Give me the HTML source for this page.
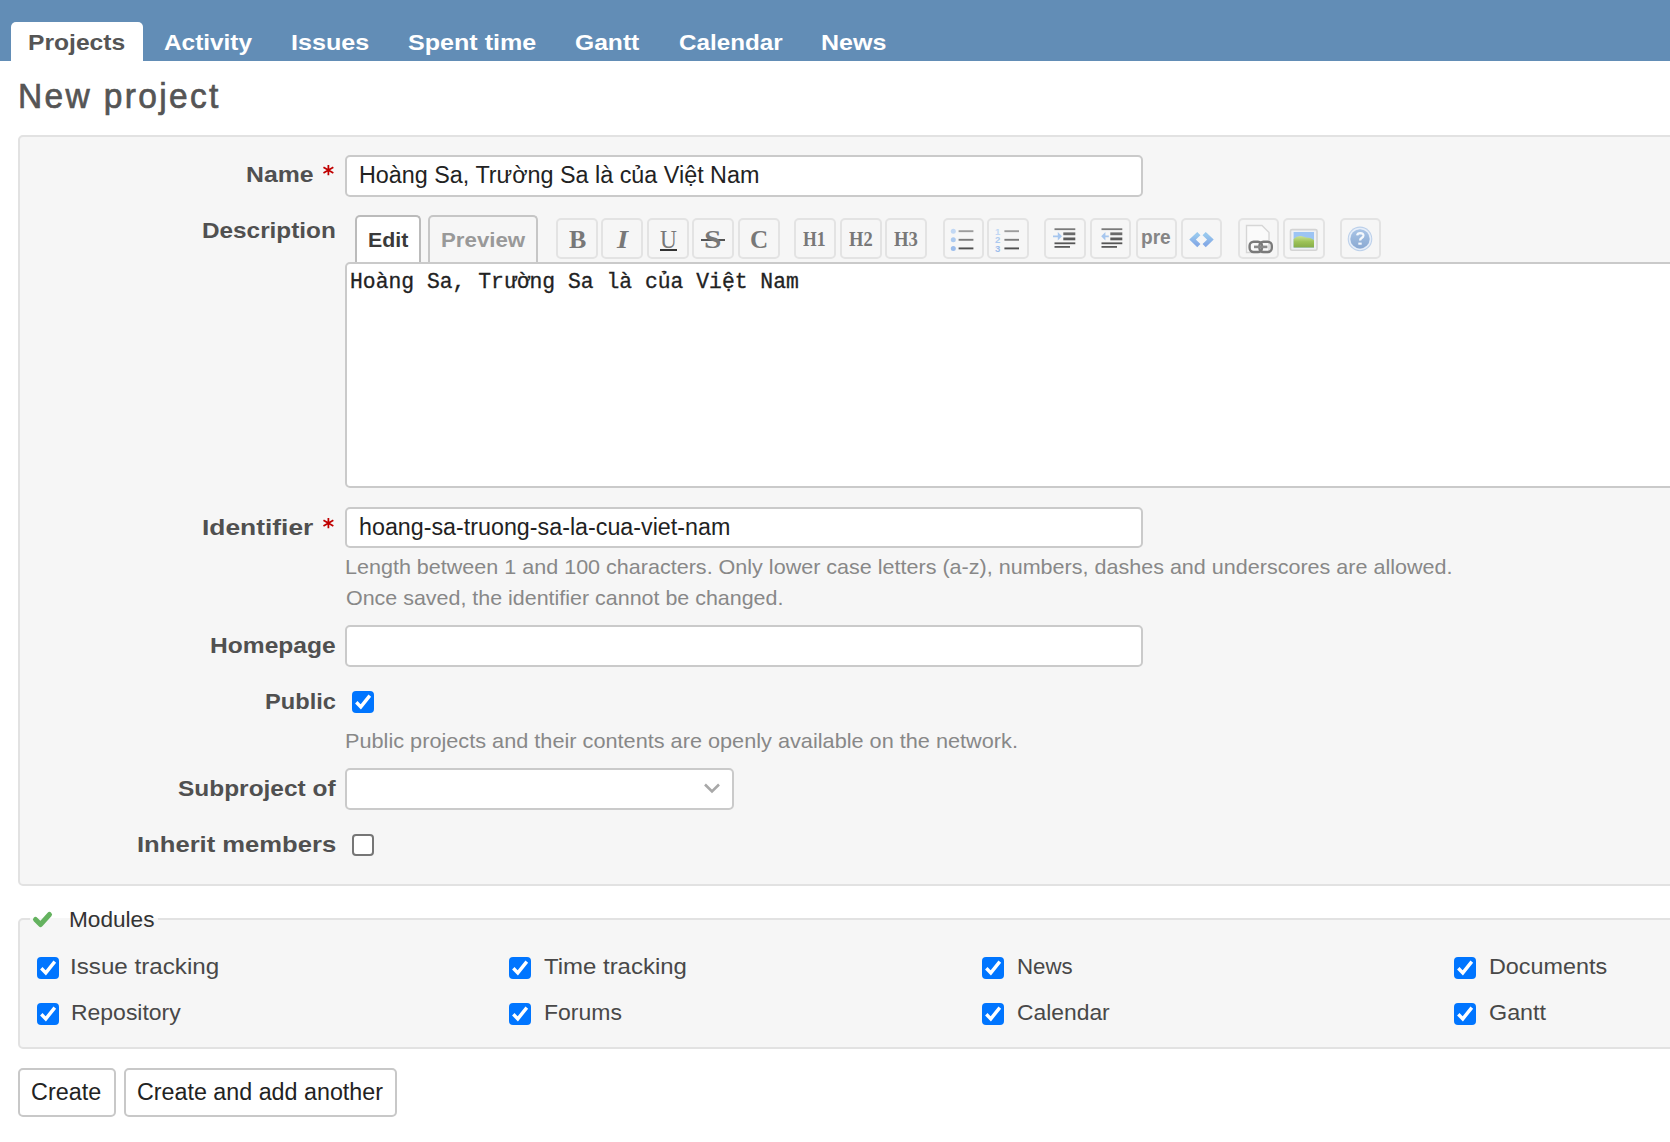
<!DOCTYPE html><html><head><meta charset="utf-8"><title>New project</title><style>
*{margin:0;padding:0;box-sizing:border-box}
html,body{width:1670px;height:1142px;overflow:hidden;background:#fff;position:relative;font-family:"Liberation Sans",sans-serif}
.a{position:absolute}
.t{position:absolute;white-space:pre;transform-origin:0 0}
.inp{position:absolute;background:#fff;border:2px solid #cacaca;border-radius:5px}
.tb{position:absolute;top:218px;width:41.7px;height:41.3px;border:2px solid #e3e3e3;border-radius:5px}
.cb{position:absolute;width:22px;height:22px;border-radius:4px;background:#0075ff}
.cb svg{position:absolute;left:0;top:0}
.btn{position:absolute;background:#fff;border:2px solid #c8c8c8;border-radius:5px}
</style></head><body>
<div class="a" style="left:0;top:0;width:1670px;height:61px;background:#628db6"></div>
<div class="a" style="left:11px;top:22px;width:132px;height:40px;background:#fff;border-radius:5px 5px 0 0"></div>
<div class="a" style="left:18px;top:135px;width:1700px;height:751px;background:#f6f6f6;border:2px solid #e2e2e2;border-radius:5px"></div>
<div class="inp" style="left:345px;top:155px;width:798px;height:42px"></div>
<div class="inp" style="left:345px;top:262px;width:1400px;height:226px;border-radius:5px 0 0 5px"></div>
<div class="a" style="left:355px;top:215px;width:66px;height:47px;background:#fff;border:2px solid #bbb;border-bottom:none;border-radius:5px 5px 0 0"></div>
<div class="a" style="left:428px;top:215px;width:110px;height:47px;background:#f6f6f6;border:2px solid #c6c6c6;border-bottom:none;border-radius:5px 5px 0 0"></div>
<div class="tb" style="left:556px"></div>
<div class="tb" style="left:601px"></div>
<div class="tb" style="left:647px"></div>
<div class="tb" style="left:692.3px"></div>
<div class="tb" style="left:738px"></div>
<div class="tb" style="left:794.4px"></div>
<div class="tb" style="left:840.4px"></div>
<div class="tb" style="left:885.4px"></div>
<div class="tb" style="left:942.5px"></div>
<div class="tb" style="left:987.3px"></div>
<div class="tb" style="left:1044.4px"></div>
<div class="tb" style="left:1089.6px"></div>
<div class="tb" style="left:1135.6px"></div>
<div class="tb" style="left:1180.6px"></div>
<div class="tb" style="left:1237.5px"></div>
<div class="tb" style="left:1283.1px"></div>
<div class="tb" style="left:1339.6px"></div>
<div class="inp" style="left:345px;top:507px;width:798px;height:41px"></div>
<div class="inp" style="left:345px;top:625px;width:798px;height:41.6px"></div>
<div class="inp" style="left:345px;top:768px;width:389px;height:41.5px"></div>
<svg class="a" style="left:700px;top:779.3px" width="24" height="18" viewBox="0 0 24 18"><path d="M5 5.5 L12 12.5 L19 5.5" fill="none" stroke="#a8a8a8" stroke-width="2.6"/></svg>
<div class="cb" style="left:352px;top:691px"><svg width="22" height="22" viewBox="0 0 22 22"><path d="M4.3 11.3 L8.8 15.9 L17.8 4.6" fill="none" stroke="#fff" stroke-width="3.4"/></svg></div>
<div class="a" style="left:352px;top:834px;width:22px;height:22px;border:2px solid #767676;border-radius:4px;background:#fff"></div>
<div class="a" style="left:18px;top:918px;width:1700px;height:131px;background:#f6f6f6;border:2px solid #e2e2e2;border-radius:5px"></div>
<div class="a" style="left:30px;top:900px;width:128px;height:18px;background:#fff"></div><div class="a" style="left:30px;top:918px;width:128px;height:2px;background:#f6f6f6"></div>
<svg class="a" style="left:30px;top:908px" width="24" height="22" viewBox="0 0 24 22"><path d="M5.5 11.5 L10.5 16.5 L19.5 6.5" fill="none" stroke="#64b25f" stroke-width="5" stroke-linecap="round" stroke-linejoin="round"/></svg>
<div class="cb" style="left:37px;top:957px"><svg width="22" height="22" viewBox="0 0 22 22"><path d="M4.3 11.3 L8.8 15.9 L17.8 4.6" fill="none" stroke="#fff" stroke-width="3.4"/></svg></div>
<div class="cb" style="left:37px;top:1003px"><svg width="22" height="22" viewBox="0 0 22 22"><path d="M4.3 11.3 L8.8 15.9 L17.8 4.6" fill="none" stroke="#fff" stroke-width="3.4"/></svg></div>
<div class="cb" style="left:509px;top:957px"><svg width="22" height="22" viewBox="0 0 22 22"><path d="M4.3 11.3 L8.8 15.9 L17.8 4.6" fill="none" stroke="#fff" stroke-width="3.4"/></svg></div>
<div class="cb" style="left:509px;top:1003px"><svg width="22" height="22" viewBox="0 0 22 22"><path d="M4.3 11.3 L8.8 15.9 L17.8 4.6" fill="none" stroke="#fff" stroke-width="3.4"/></svg></div>
<div class="cb" style="left:982px;top:957px"><svg width="22" height="22" viewBox="0 0 22 22"><path d="M4.3 11.3 L8.8 15.9 L17.8 4.6" fill="none" stroke="#fff" stroke-width="3.4"/></svg></div>
<div class="cb" style="left:982px;top:1003px"><svg width="22" height="22" viewBox="0 0 22 22"><path d="M4.3 11.3 L8.8 15.9 L17.8 4.6" fill="none" stroke="#fff" stroke-width="3.4"/></svg></div>
<div class="cb" style="left:1454px;top:957px"><svg width="22" height="22" viewBox="0 0 22 22"><path d="M4.3 11.3 L8.8 15.9 L17.8 4.6" fill="none" stroke="#fff" stroke-width="3.4"/></svg></div>
<div class="cb" style="left:1454px;top:1003px"><svg width="22" height="22" viewBox="0 0 22 22"><path d="M4.3 11.3 L8.8 15.9 L17.8 4.6" fill="none" stroke="#fff" stroke-width="3.4"/></svg></div>
<div class="btn" style="left:18px;top:1068px;width:98px;height:48.5px"></div>
<div class="btn" style="left:123.5px;top:1068px;width:273px;height:48.5px"></div>
<div class="a" style="left:660px;top:249px;width:16.5px;height:2px;background:#333"></div>
<div class="a" style="left:701px;top:239px;width:23.5px;height:2px;background:#555"></div>
<svg class="a" style="left:948px;top:226px" width="30" height="26" viewBox="0 0 30 26"><circle cx="5.3" cy="5.2" r="2.5" fill="#c2d8f4"/><rect x="10.6" y="4.25" width="14.8" height="1.9" fill="#9c9c9c"/><circle cx="5.3" cy="13.8" r="2.5" fill="#accaf0"/><rect x="10.6" y="12.850000000000001" width="14.8" height="1.9" fill="#7c7c7c"/><circle cx="5.3" cy="22.4" r="2.5" fill="#9cbdec"/><rect x="10.6" y="21.45" width="14.8" height="1.9" fill="#505050"/></svg>
<svg class="a" style="left:992px;top:226px" width="30" height="26" viewBox="0 0 30 26"><text x="3" y="8.6" font-family="Liberation Sans" font-weight="bold" font-size="9.6" fill="#c2d8f4">1</text><rect x="12.4" y="4.25" width="14.6" height="1.9" fill="#9c9c9c"/><text x="3" y="17.2" font-family="Liberation Sans" font-weight="bold" font-size="9.6" fill="#accaf0">2</text><rect x="12.4" y="12.850000000000001" width="14.6" height="1.9" fill="#7c7c7c"/><text x="3" y="25.799999999999997" font-family="Liberation Sans" font-weight="bold" font-size="9.6" fill="#9cbdec">3</text><rect x="12.4" y="21.45" width="14.6" height="1.9" fill="#505050"/></svg>
<svg class="a" style="left:1053px;top:226px" width="26" height="24" viewBox="0 0 26 24"><rect x="1.5" y="2.3" width="20.8" height="1.8" fill="#7a7a7a"/><rect x="10.3" y="6.4" width="12" height="2.8" fill="#6a6a6a"/><rect x="10.3" y="11.5" width="12" height="2.8" fill="#5a5a5a"/><rect x="1.5" y="16.4" width="20.8" height="1.8" fill="#555"/><rect x="1.5" y="20" width="15.5" height="1.8" fill="#5a5a5a"/><path d="M-0.2 9.4 H4.8 V6 L9 10.3 L4.8 14.6 V11.2 H-0.2 Z" fill="#a6c6ee"/></svg>
<svg class="a" style="left:1099.6px;top:226px" width="26" height="24" viewBox="0 0 26 24"><rect x="1.5" y="2.3" width="20.8" height="1.8" fill="#7a7a7a"/><rect x="10.3" y="6.4" width="12" height="2.8" fill="#6a6a6a"/><rect x="10.3" y="11.5" width="12" height="2.8" fill="#5a5a5a"/><rect x="1.5" y="16.4" width="20.8" height="1.8" fill="#555"/><rect x="1.5" y="20" width="15.5" height="1.8" fill="#5a5a5a"/><path d="M8.8 9.4 H5.4 V6 L1.2 10.3 L5.4 14.6 V11.2 H8.8 Z" fill="#a6c6ee"/></svg>
<svg class="a" style="left:1180px;top:220px" width="44" height="38" viewBox="0 0 44 38"><defs><linearGradient id="cg" x1="0" y1="0" x2="0" y2="1"><stop offset="0" stop-color="#98c8ee"/><stop offset="1" stop-color="#84aae6"/></linearGradient></defs><path d="M17.2 15.2 L12.6 19.6 L17.2 24" fill="none" stroke="url(#cg)" stroke-width="4.6" stroke-linejoin="miter" stroke-linecap="square"/><path d="M25.8 15.2 L30.4 19.6 L25.8 24" fill="none" stroke="url(#cg)" stroke-width="4.6" stroke-linejoin="miter" stroke-linecap="square"/></svg>
<svg class="a" style="left:1244px;top:224px" width="30" height="30" viewBox="0 0 30 30"><path d="M2.5 1.5 H18 L25 8.5 V28.5 H2.5 Z" fill="#fafafa" stroke="#d6d6d6" stroke-width="1.4"/><rect x="5.6" y="17.8" width="12.4" height="10.2" rx="4" fill="none" stroke="#7a7a7a" stroke-width="2.4"/><rect x="15.4" y="17.8" width="12.4" height="10.2" rx="4" fill="none" stroke="#7a7a7a" stroke-width="2.4"/><rect x="10" y="21.6" width="13.4" height="2.6" fill="#8a8a8a"/></svg>
<svg class="a" style="left:1289px;top:228px" width="30" height="24" viewBox="0 0 30 24"><defs><linearGradient id="hg" x1="0" y1="0" x2="0" y2="1"><stop offset="0" stop-color="#cce39a"/><stop offset="0.5" stop-color="#9cc257"/><stop offset="1" stop-color="#86ac48"/></linearGradient></defs><rect x="1.5" y="1.6" width="26.5" height="20.6" rx="1.5" fill="#eef0f4" stroke="#d4d4d4" stroke-width="1.6"/><rect x="4.6" y="4" width="20.4" height="15.6" fill="#9cc4f4"/><path d="M4.6 11 Q8 7.5 12 8 Q15 8.8 17 9.6 Q21 9.4 25 12 V19.6 H4.6 Z" fill="url(#hg)"/></svg>
<svg class="a" style="left:1346px;top:226px" width="28" height="26" viewBox="0 0 28 26"><defs><linearGradient id="qg" x1="0" y1="0" x2="0" y2="1"><stop offset="0" stop-color="#a8c4e6"/><stop offset="1" stop-color="#8aa9d2"/></linearGradient></defs><circle cx="14" cy="12.9" r="12.3" fill="#bcd0ea"/><circle cx="14" cy="12.9" r="10.5" fill="none" stroke="#e6eef9" stroke-width="1.5"/><circle cx="14" cy="12.9" r="9.5" fill="url(#qg)"/><path d="M11.2 9.4 Q11.4 7.1 14.4 7.1 Q17.6 7.3 17.4 9.7 Q17.2 11.3 15.5 12.1 Q14.1 12.8 14.1 14.6" fill="none" stroke="#f4f8fc" stroke-width="2.3"/><rect x="12.3" y="16.6" width="3.4" height="2.1" fill="#f4f8fc"/></svg>
<svg class="a" style="left:0;top:0;overflow:visible" width="1" height="1"><path d="M328.40 165.00 L328.40 175.20 M323.46 167.25 L333.34 172.95 M323.46 172.95 L333.34 167.25 " stroke="#c00000" stroke-width="1.75" fill="none"/></svg>
<svg class="a" style="left:0;top:0;overflow:visible" width="1" height="1"><path d="M328.40 518.00 L328.40 528.20 M323.46 520.25 L333.34 525.95 M323.46 525.95 L333.34 520.25 " stroke="#c00000" stroke-width="1.75" fill="none"/></svg>
<div class="t" style="left:27.91px;top:31.80px;font-family:'Liberation Sans';font-size:22.6px;line-height:22.6px;font-weight:bold;font-style:normal;color:#555;transform:scaleX(1.0902);letter-spacing:0px;">Projects</div>
<div class="t" style="left:164.00px;top:31.80px;font-family:'Liberation Sans';font-size:22.6px;line-height:22.6px;font-weight:bold;font-style:normal;color:#fff;transform:scaleX(1.0786);letter-spacing:0px;">Activity</div>
<div class="t" style="left:291.39px;top:31.80px;font-family:'Liberation Sans';font-size:22.6px;line-height:22.6px;font-weight:bold;font-style:normal;color:#fff;transform:scaleX(1.1123);letter-spacing:0px;">Issues</div>
<div class="t" style="left:408.00px;top:31.80px;font-family:'Liberation Sans';font-size:22.6px;line-height:22.6px;font-weight:bold;font-style:normal;color:#fff;transform:scaleX(1.1102);letter-spacing:0px;">Spent time</div>
<div class="t" style="left:575.00px;top:31.80px;font-family:'Liberation Sans';font-size:22.6px;line-height:22.6px;font-weight:bold;font-style:normal;color:#fff;transform:scaleX(1.0897);letter-spacing:0px;">Gantt</div>
<div class="t" style="left:678.70px;top:31.80px;font-family:'Liberation Sans';font-size:22.6px;line-height:22.6px;font-weight:bold;font-style:normal;color:#fff;transform:scaleX(1.0713);letter-spacing:0px;">Calendar</div>
<div class="t" style="left:820.89px;top:31.80px;font-family:'Liberation Sans';font-size:22.6px;line-height:22.6px;font-weight:bold;font-style:normal;color:#fff;transform:scaleX(1.1087);letter-spacing:0px;">News</div>
<div class="t" style="left:17.63px;top:79.20px;font-family:'Liberation Sans';font-size:35.8px;line-height:35.8px;font-weight:normal;font-style:normal;color:#555;transform:scaleX(0.9361);letter-spacing:2.5px;-webkit-text-stroke:0.7px #555;">New project</div>
<div class="t" style="left:246.41px;top:163.00px;font-family:'Liberation Sans';font-size:22.8px;line-height:22.8px;font-weight:bold;font-style:normal;color:#505050;transform:scaleX(1.0892);letter-spacing:0px;">Name</div>
<div class="t" style="left:201.93px;top:219.00px;font-family:'Liberation Sans';font-size:22.8px;line-height:22.8px;font-weight:bold;font-style:normal;color:#505050;transform:scaleX(1.0666);letter-spacing:0px;">Description</div>
<div class="t" style="left:201.84px;top:516.00px;font-family:'Liberation Sans';font-size:22.8px;line-height:22.8px;font-weight:bold;font-style:normal;color:#505050;transform:scaleX(1.1563);letter-spacing:0px;">Identifier</div>
<div class="t" style="left:210.22px;top:634.00px;font-family:'Liberation Sans';font-size:22.8px;line-height:22.8px;font-weight:bold;font-style:normal;color:#505050;transform:scaleX(1.0786);letter-spacing:0px;">Homepage</div>
<div class="t" style="left:264.96px;top:690.00px;font-family:'Liberation Sans';font-size:22.8px;line-height:22.8px;font-weight:bold;font-style:normal;color:#505050;transform:scaleX(1.0366);letter-spacing:0px;">Public</div>
<div class="t" style="left:177.70px;top:777.00px;font-family:'Liberation Sans';font-size:22.8px;line-height:22.8px;font-weight:bold;font-style:normal;color:#505050;transform:scaleX(1.0725);letter-spacing:0px;">Subproject of</div>
<div class="t" style="left:136.88px;top:833.20px;font-family:'Liberation Sans';font-size:22.8px;line-height:22.8px;font-weight:bold;font-style:normal;color:#505050;transform:scaleX(1.1230);letter-spacing:0px;">Inherit members</div>
<div class="t" style="left:359.00px;top:164.00px;font-family:'Liberation Sans';font-size:23.3px;line-height:23.3px;font-weight:normal;font-style:normal;color:#222;transform:scaleX(1.0022);letter-spacing:0px;">Hoàng Sa, Trường Sa là của Việt Nam</div>
<div class="t" style="left:359.00px;top:516.30px;font-family:'Liberation Sans';font-size:23.3px;line-height:23.3px;font-weight:normal;font-style:normal;color:#222;transform:scaleX(0.9991);letter-spacing:0px;">hoang-sa-truong-sa-la-cua-viet-nam</div>
<div class="t" style="left:350.30px;top:272.00px;font-family:'Liberation Mono';font-size:21.4px;line-height:21.4px;font-weight:normal;font-style:normal;color:#222;transform:scaleX(0.9990);letter-spacing:0px;-webkit-text-stroke:0.3px #222;">Hoàng Sa, Trường Sa là của Việt Nam</div>
<div class="t" style="left:367.98px;top:230.00px;font-family:'Liberation Sans';font-size:20.8px;line-height:20.8px;font-weight:bold;font-style:normal;color:#3a3a3a;transform:scaleX(1.0247);letter-spacing:0px;">Edit</div>
<div class="t" style="left:440.53px;top:230.00px;font-family:'Liberation Sans';font-size:20.8px;line-height:20.8px;font-weight:bold;font-style:normal;color:#999;transform:scaleX(1.0709);letter-spacing:0px;">Preview</div>
<div class="t" style="left:344.94px;top:556.70px;font-family:'Liberation Sans';font-size:20.3px;line-height:20.3px;font-weight:normal;font-style:normal;color:#888;transform:scaleX(1.0620);letter-spacing:0px;">Length between 1 and 100 characters. Only lower case letters (a-z), numbers, dashes and underscores are allowed.</div>
<div class="t" style="left:346.00px;top:588.00px;font-family:'Liberation Sans';font-size:20.3px;line-height:20.3px;font-weight:normal;font-style:normal;color:#888;transform:scaleX(1.0571);letter-spacing:0px;">Once saved, the identifier cannot be changed.</div>
<div class="t" style="left:345.13px;top:730.50px;font-family:'Liberation Sans';font-size:20.3px;line-height:20.3px;font-weight:normal;font-style:normal;color:#888;transform:scaleX(1.0697);letter-spacing:0px;">Public projects and their contents are openly available on the network.</div>
<div class="t" style="left:68.61px;top:908.00px;font-family:'Liberation Sans';font-size:22.8px;line-height:22.8px;font-weight:normal;font-style:normal;color:#333;transform:scaleX(0.9921);letter-spacing:0px;">Modules</div>
<div class="t" style="left:70.35px;top:955.60px;font-family:'Liberation Sans';font-size:22.5px;line-height:22.5px;font-weight:normal;font-style:normal;color:#484848;transform:scaleX(1.0748);letter-spacing:0px;">Issue tracking</div>
<div class="t" style="left:544.30px;top:955.60px;font-family:'Liberation Sans';font-size:22.5px;line-height:22.5px;font-weight:normal;font-style:normal;color:#484848;transform:scaleX(1.0644);letter-spacing:0px;">Time tracking</div>
<div class="t" style="left:1016.61px;top:955.60px;font-family:'Liberation Sans';font-size:22.5px;line-height:22.5px;font-weight:normal;font-style:normal;color:#484848;transform:scaleX(0.9889);letter-spacing:0px;">News</div>
<div class="t" style="left:1488.96px;top:955.60px;font-family:'Liberation Sans';font-size:22.5px;line-height:22.5px;font-weight:normal;font-style:normal;color:#484848;transform:scaleX(1.0378);letter-spacing:0px;">Documents</div>
<div class="t" style="left:71.48px;top:1002.00px;font-family:'Liberation Sans';font-size:22.5px;line-height:22.5px;font-weight:normal;font-style:normal;color:#484848;transform:scaleX(1.0205);letter-spacing:0px;">Repository</div>
<div class="t" style="left:543.68px;top:1002.00px;font-family:'Liberation Sans';font-size:22.5px;line-height:22.5px;font-weight:normal;font-style:normal;color:#484848;transform:scaleX(1.0213);letter-spacing:0px;">Forums</div>
<div class="t" style="left:1016.58px;top:1002.00px;font-family:'Liberation Sans';font-size:22.5px;line-height:22.5px;font-weight:normal;font-style:normal;color:#484848;transform:scaleX(1.0153);letter-spacing:0px;">Calendar</div>
<div class="t" style="left:1488.96px;top:1002.00px;font-family:'Liberation Sans';font-size:22.5px;line-height:22.5px;font-weight:normal;font-style:normal;color:#484848;transform:scaleX(1.0369);letter-spacing:0px;">Gantt</div>
<div class="t" style="left:31.30px;top:1080.80px;font-family:'Liberation Sans';font-size:23.3px;line-height:23.3px;font-weight:normal;font-style:normal;color:#222;transform:scaleX(1.0034);letter-spacing:0px;">Create</div>
<div class="t" style="left:136.70px;top:1080.80px;font-family:'Liberation Sans';font-size:23.3px;line-height:23.3px;font-weight:normal;font-style:normal;color:#222;transform:scaleX(0.9994);letter-spacing:0px;">Create and add another</div>
<div class="t" style="left:568.70px;top:226.60px;font-family:'Liberation Serif';font-size:25.5px;line-height:25.5px;font-weight:bold;font-style:normal;color:#787878;transform:scaleX(1.0176);letter-spacing:0px;">B</div>
<div class="t" style="left:616.52px;top:226.60px;font-family:'Liberation Serif';font-size:25.5px;line-height:25.5px;font-weight:bold;font-style:italic;color:#787878;transform:scaleX(1.1167);letter-spacing:0px;">I</div>
<div class="t" style="left:660.00px;top:226.60px;font-family:'Liberation Serif';font-size:25.5px;line-height:25.5px;font-weight:normal;font-style:normal;color:#787878;transform:scaleX(0.9167);letter-spacing:0px;">U</div>
<div class="t" style="left:703.77px;top:226.60px;font-family:'Liberation Serif';font-size:25.5px;line-height:25.5px;font-weight:bold;font-style:normal;color:#787878;transform:scaleX(1.2308);letter-spacing:0px;">S</div>
<div class="t" style="left:749.51px;top:226.60px;font-family:'Liberation Serif';font-size:25.5px;line-height:25.5px;font-weight:bold;font-style:normal;color:#787878;transform:scaleX(0.9875);letter-spacing:0px;">C</div>
<div class="t" style="left:803.00px;top:229.00px;font-family:'Liberation Serif';font-size:21px;line-height:21px;font-weight:bold;font-style:normal;color:#787878;transform:scaleX(0.8430);letter-spacing:0px;">H1</div>
<div class="t" style="left:849.00px;top:229.00px;font-family:'Liberation Serif';font-size:21px;line-height:21px;font-weight:bold;font-style:normal;color:#787878;transform:scaleX(0.8810);letter-spacing:0px;">H2</div>
<div class="t" style="left:893.80px;top:229.00px;font-family:'Liberation Serif';font-size:21px;line-height:21px;font-weight:bold;font-style:normal;color:#787878;transform:scaleX(0.8886);letter-spacing:0px;">H3</div>
<div class="t" style="left:1140.89px;top:226.40px;font-family:'Liberation Sans';font-size:21px;line-height:21px;font-weight:bold;font-style:normal;color:#858585;transform:scaleX(0.9097);letter-spacing:0px;">pre</div>
</body></html>
